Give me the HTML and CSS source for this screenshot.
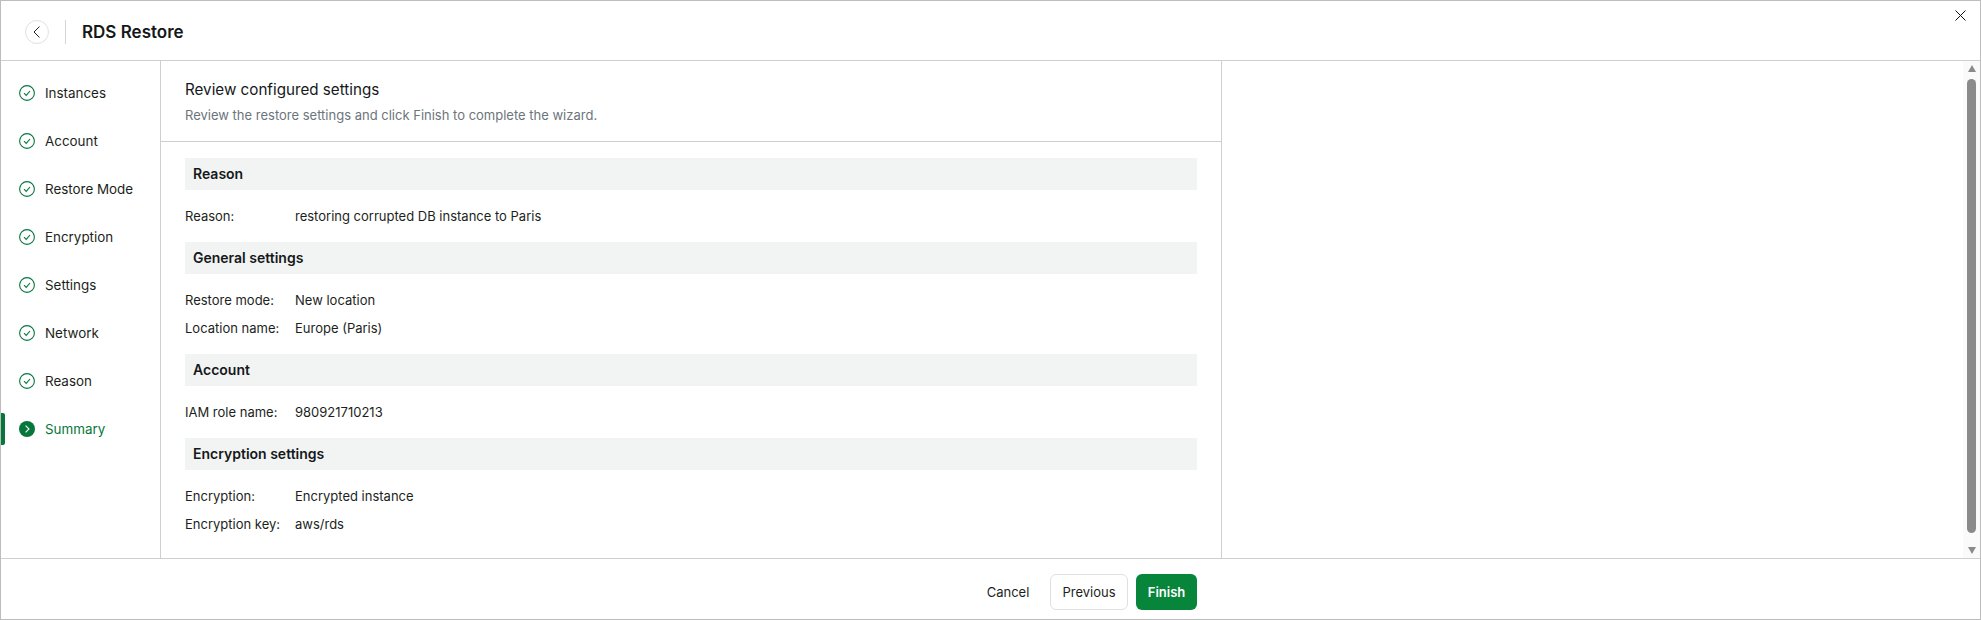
FILE: index.html
```html
<!DOCTYPE html>
<html lang="en">
<head>
<meta charset="utf-8">
<title>RDS Restore</title>
<link rel="stylesheet" href="styles.css">
</head>
<body>
<div class="dialog">
  <header class="header">
    <button class="back" type="button" aria-label="Back">
      <svg width="8" height="12" viewBox="0 0 8 12"><path d="M6.5 .5 L1 6 L6.5 11.5" fill="none" stroke="#222" stroke-width="1"/></svg>
    </button>
    <span class="header-sep"></span>
    <h1 class="title">RDS Restore</h1>
    <button class="close" type="button" aria-label="Close">
      <svg width="11" height="11" viewBox="0 0 11 11"><path d="M.5.5l10 10M10.5.5l-10 10" fill="none" stroke="#111" stroke-width="1"/></svg>
    </button>
  </header>
  <div class="body">
    <nav class="steps">
      <div class="step"><svg class="ico" width="16" height="16" viewBox="0 0 16 16"><circle cx="8" cy="8" r="7.4" fill="none" stroke="#07763a" stroke-width="1.1"/><path d="M5 8.2l2.2 2.2L11 6" fill="none" stroke="#07763a" stroke-width="1.1"/></svg><span>Instances</span></div>
      <div class="step"><svg class="ico" width="16" height="16" viewBox="0 0 16 16"><circle cx="8" cy="8" r="7.4" fill="none" stroke="#07763a" stroke-width="1.1"/><path d="M5 8.2l2.2 2.2L11 6" fill="none" stroke="#07763a" stroke-width="1.1"/></svg><span>Account</span></div>
      <div class="step"><svg class="ico" width="16" height="16" viewBox="0 0 16 16"><circle cx="8" cy="8" r="7.4" fill="none" stroke="#07763a" stroke-width="1.1"/><path d="M5 8.2l2.2 2.2L11 6" fill="none" stroke="#07763a" stroke-width="1.1"/></svg><span>Restore Mode</span></div>
      <div class="step"><svg class="ico" width="16" height="16" viewBox="0 0 16 16"><circle cx="8" cy="8" r="7.4" fill="none" stroke="#07763a" stroke-width="1.1"/><path d="M5 8.2l2.2 2.2L11 6" fill="none" stroke="#07763a" stroke-width="1.1"/></svg><span>Encryption</span></div>
      <div class="step"><svg class="ico" width="16" height="16" viewBox="0 0 16 16"><circle cx="8" cy="8" r="7.4" fill="none" stroke="#07763a" stroke-width="1.1"/><path d="M5 8.2l2.2 2.2L11 6" fill="none" stroke="#07763a" stroke-width="1.1"/></svg><span>Settings</span></div>
      <div class="step"><svg class="ico" width="16" height="16" viewBox="0 0 16 16"><circle cx="8" cy="8" r="7.4" fill="none" stroke="#07763a" stroke-width="1.1"/><path d="M5 8.2l2.2 2.2L11 6" fill="none" stroke="#07763a" stroke-width="1.1"/></svg><span>Network</span></div>
      <div class="step"><svg class="ico" width="16" height="16" viewBox="0 0 16 16"><circle cx="8" cy="8" r="7.4" fill="none" stroke="#07763a" stroke-width="1.1"/><path d="M5 8.2l2.2 2.2L11 6" fill="none" stroke="#07763a" stroke-width="1.1"/></svg><span>Reason</span></div>
      <div class="step active"><svg class="ico" width="16" height="16" viewBox="0 0 16 16"><circle cx="8" cy="8" r="8" fill="#07763a"/><path d="M6.6 4.6L10 8l-3.4 3.4" fill="none" stroke="#fff" stroke-width="1.1"/></svg><span>Summary</span></div>
    </nav>
    <main class="main">
      <div class="intro">
        <h2 class="intro-title">Review configured settings</h2>
        <p class="intro-sub">Review the restore settings and click Finish to complete the wizard.</p>
      </div>
      <div class="summary">
        <h3 class="sec">Reason</h3>
        <dl class="rows">
          <div class="row"><dt>Reason:</dt><dd>restoring corrupted DB instance to Paris</dd></div>
        </dl>
        <h3 class="sec">General settings</h3>
        <dl class="rows">
          <div class="row"><dt>Restore mode:</dt><dd>New location</dd></div>
          <div class="row"><dt>Location name:</dt><dd>Europe (Paris)</dd></div>
        </dl>
        <h3 class="sec">Account</h3>
        <dl class="rows">
          <div class="row"><dt>IAM role name:</dt><dd>980921710213</dd></div>
        </dl>
        <h3 class="sec">Encryption settings</h3>
        <dl class="rows">
          <div class="row"><dt>Encryption:</dt><dd>Encrypted instance</dd></div>
          <div class="row"><dt>Encryption key:</dt><dd>aws/rds</dd></div>
        </dl>
      </div>
    </main>
    <aside class="side">
      <div class="scrollbar">
        <span class="arrow up"></span>
        <span class="thumb"></span>
        <span class="arrow down"></span>
      </div>
    </aside>
  </div>
  <footer class="footer">
    <button class="btn text" type="button">Cancel</button>
    <button class="btn outline" type="button">Previous</button>
    <button class="btn primary" type="button">Finish</button>
  </footer>
</div>
</body>
</html>
```

FILE: styles.css
```css
* { box-sizing: border-box; }
html, body { margin: 0; padding: 0; height: 100%; background: #fff; }
body { font-family: Inter, "Liberation Sans", sans-serif; font-size: 13px; color: #1c1f21; }
button { font-family: inherit; }

.dialog {
  width: 1981px; height: 620px;
  border: 1px solid #bdbdbd;
  display: flex; flex-direction: column;
  background: #fff;
}
.header {
  height: 60px; flex: none;
  display: flex; align-items: center;
  padding: 3px 0 0 24px;
  border-bottom: 1px solid #cdd0d0;
  position: relative;
}
.back {
  width: 24px; height: 24px; border-radius: 50%;
  border: 1px solid #dfe1e1; background: #fff; padding: 0;
  display: flex; align-items: center; justify-content: center;
}
.header-sep { width: 1px; height: 24px; background: #d5d7d7; margin: 0 16px 0 16px; }
.title { margin: 0; font-size: 17px; font-weight: 600; line-height: 24px; color: #15181a; }
.close {
  position: absolute; right: 14px; top: 9px;
  width: 11px; height: 11px; padding: 0; border: 0; background: none; display: flex;
}
.body { flex: 1; display: flex; min-height: 0; }
.steps {
  width: 160px; flex: none;
  border-right: 1px solid #cdd0d0;
  padding-top: 8px;
}
.step {
  height: 48px; display: flex; align-items: center; gap: 10px;
  padding-left: 18px; position: relative;
  font-size: 13.4px; color: #1c1f21;
}
.ico { flex: none; }
.step.active { color: #07763a; }
.step.active::before {
  content: ""; position: absolute; left: 0; top: 8px;
  width: 4px; height: 32px; background: #07763a;
  border-radius: 0 2px 2px 0;
}
.main {
  width: 1061px; flex: none;
  border-right: 1px solid #cdd0d0;
  overflow: hidden;
}
.intro { height: 81px; border-bottom: 1px solid #cdd0d0; padding: 19px 24px 0; }
.intro-title { margin: 0; font-size: 15.2px; font-weight: 400; line-height: 20px; color: #15181a; }
.intro-sub { margin: 6px 0 0; font-size: 13px; line-height: 18px; color: #6c757c; }
.summary { padding: 16px 24px 0 24px; }
.sec {
  margin: 0; height: 32px; line-height: 32px; padding-left: 8px;
  background: #f2f4f3; font-size: 14px; font-weight: 600; color: #15181a;
}
.rows { margin: 0; padding: 12px 0 12px; }
.row { display: flex; height: 28px; align-items: center; }
.row dt { width: 110px; flex: none; }
.row dd { margin: 0; }
.side { flex: 1; display: flex; justify-content: flex-end; }
.scrollbar {
  width: 17px; background: #fafafa;
  display: flex; flex-direction: column; align-items: center;
  padding: 4px 0 4px;
}
.thumb { width: 9px; flex: 1; margin: 7px 0 14px; background: #8a8a8a; border-radius: 5px; }
.arrow { width: 0; height: 0; border-left: 4.5px solid transparent; border-right: 4.5px solid transparent; }
.arrow.up { border-bottom: 7px solid #8a8a8a; }
.arrow.down { border-top: 7px solid #8a8a8a; }
.footer {
  height: 61px; flex: none;
  border-top: 1px solid #cdd0d0;
  display: flex; align-items: center;
  padding: 6px 0 0 973px;
  gap: 8px;
}
.btn { height: 36px; border-radius: 6px; font-size: 13px; padding: 0; cursor: pointer; color: #1c1f21; }
.btn.text { width: 68px; border: 0; background: none; }
.btn.outline { width: 78px; border: 1px solid #dfe1e1; background: #fff; }
.btn.primary { width: 61px; border: 0; background: #07853a; color: #fff; font-weight: 600; }
```
